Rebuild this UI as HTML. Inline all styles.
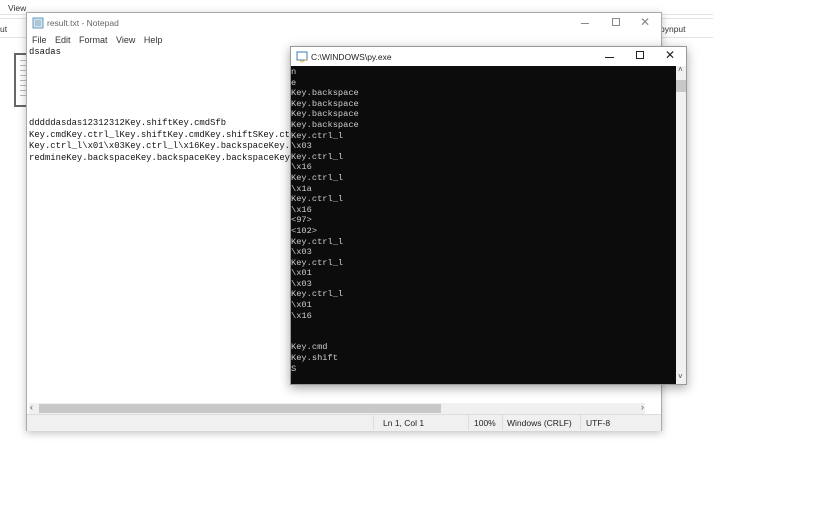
<!DOCTYPE html>
<html><head><meta charset="utf-8"><style>
*{margin:0;padding:0;box-sizing:border-box}
body{width:825px;height:509px;background:#fff;position:relative;overflow:hidden;font-family:"Liberation Sans",sans-serif}
.abs{position:absolute}
.ui{font-size:8.5px;color:#222}
.mono{font-family:"Liberation Mono",monospace;white-space:pre}
</style></head><body>
<!-- background window -->
<div class="abs ui" style="left:8px;top:3px;color:#333">View</div>
<div class="abs" style="left:0;top:14px;width:713px;height:1px;background:#e3e3e3"></div>
<div class="abs" style="left:0;top:18px;width:713px;height:1px;background:#e3e3e3"></div>
<div class="abs ui" style="left:0;top:24px;color:#333">ut</div>
<div class="abs ui" style="left:660px;top:24px;color:#333">pynput</div>
<div class="abs" style="left:0;top:37px;width:713px;height:1px;background:#e3e3e3"></div>
<div class="abs" style="left:14px;top:53px;width:14px;height:54px;border:2px solid #666;border-right:none;background:#fff"></div>
<div class="abs" style="left:20px;top:60px;width:6px;height:40px;background:repeating-linear-gradient(#bbb 0 1px,transparent 1px 5px)"></div>

<!-- notepad -->
<div class="abs" style="left:26px;top:12px;width:636px;height:419px;background:#fff;border:1px solid #aaa;box-shadow:0 2px 8px rgba(0,0,0,.25)">
  <svg class="abs" style="left:5px;top:4px" width="12" height="12"><rect x="1" y="1" width="10" height="10" fill="#cfe3f0" stroke="#6a9bbd"/><path d="M3 4h6M3 6h6M3 8h6" stroke="#8ab"/></svg>
  <div class="abs ui" style="left:20px;top:5px;color:#666">result.txt - Notepad</div>
  <div class="abs" style="left:554px;top:10px;width:8px;height:1px;background:#888"></div>
  <div class="abs" style="left:585px;top:5px;width:8px;height:8px;border:1px solid #888"></div>
  <div class="abs" style="left:613px;top:2px;color:#888;font-size:12px">✕</div>
  <div class="abs ui" style="left:5px;top:22px;word-spacing:6px;color:#333;font-size:9px">File Edit Format View Help</div>
  <div class="abs mono" style="left:2px;top:34px;font-size:8.9px;line-height:11.6px;color:#111">dsadas</div>
  <div class="abs mono" style="left:2px;top:105px;font-size:8.9px;line-height:11.6px;color:#111">dddddasdas12312312Key.shiftKey.cmdSfb
Key.cmdKey.ctrl_lKey.shiftKey.cmdKey.shiftSKey.ct
Key.ctrl_l\x01\x03Key.ctrl_l\x16Key.backspaceKey.
redmineKey.backspaceKey.backspaceKey.backspaceKey</div>
  <div class="abs" style="left:618px;top:33px;width:16px;height:357px;background:#fff"></div>
  <div class="abs" style="left:2px;top:390px;width:616px;height:11px;background:#f0f0f0"></div>
  <div class="abs" style="left:12px;top:391px;width:402px;height:9px;background:#c8c8c8"></div>
  <div class="abs" style="left:3px;top:389px;font-size:9px;color:#555">‹</div>
  <div class="abs" style="left:614px;top:389px;font-size:9px;color:#555">›</div>
  <div class="abs" style="left:0;top:401px;width:634px;height:17px;background:#f0f0f0;border-top:1px solid #ddd"></div>
  <div class="abs" style="left:346px;top:402px;width:1px;height:15px;background:#ddd"></div>
  <div class="abs" style="left:441px;top:402px;width:1px;height:15px;background:#ddd"></div>
  <div class="abs" style="left:475px;top:402px;width:1px;height:15px;background:#ddd"></div>
  <div class="abs" style="left:553px;top:402px;width:1px;height:15px;background:#ddd"></div>
  <div class="abs ui" style="left:356px;top:405px">Ln 1, Col 1</div>
  <div class="abs ui" style="left:447px;top:405px">100%</div>
  <div class="abs ui" style="left:480px;top:405px">Windows (CRLF)</div>
  <div class="abs ui" style="left:559px;top:405px">UTF-8</div>
</div>

<!-- console -->
<div class="abs" style="left:290px;top:46px;width:397px;height:339px;background:#fff;border:1px solid #999;box-shadow:0 3px 10px rgba(0,0,0,.35)">
  <svg class="abs" style="left:5px;top:4px" width="13" height="12"><rect x="1" y="1" width="10" height="8" fill="#fff" stroke="#3b7bbf"/><path d="M3 9l3 2 5-3" stroke="#e8b838" fill="none"/></svg>
  <div class="abs ui" style="left:20px;top:5px">C:\WINDOWS\py.exe</div>
  <div class="abs" style="left:314px;top:10px;width:9px;height:1px;background:#222"></div>
  <div class="abs" style="left:345px;top:4px;width:8px;height:8px;border:1px solid #222"></div>
  <div class="abs" style="left:374px;top:1px;color:#222;font-size:12px">✕</div>
  <div class="abs" style="left:0;top:19px;width:385px;height:318px;background:#0c0c0c"></div>
  <div class="abs mono" style="left:0;top:20px;font-size:8.7px;line-height:10.6px;color:#ccc">n
e
Key.backspace
Key.backspace
Key.backspace
Key.backspace
Key.ctrl_l
\x03
Key.ctrl_l
\x16
Key.ctrl_l
\x1a
Key.ctrl_l
\x16
&lt;97&gt;
&lt;102&gt;
Key.ctrl_l
\x03
Key.ctrl_l
\x01
\x03
Key.ctrl_l
\x01
\x16


Key.cmd
Key.shift
S</div>
  <div class="abs" style="left:385px;top:19px;width:10px;height:318px;background:#f0f0f0"></div>
  <div class="abs" style="left:385px;top:33px;width:10px;height:12px;background:#c8c8c8"></div>
  <div class="abs" style="left:387px;top:18px;font-size:8px;color:#444">˄</div>
  <div class="abs" style="left:387px;top:325px;font-size:8px;color:#444">˅</div>
</div>
</body></html>
